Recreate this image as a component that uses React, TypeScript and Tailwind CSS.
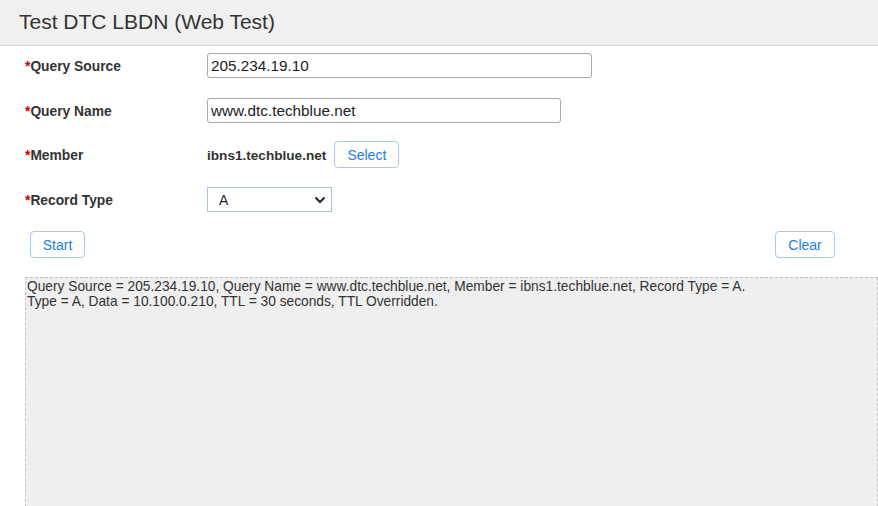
import React from "react";

function Label({ text }: { text: string }) {
  return (
    <div className="w-[182px] shrink-0 pt-[3px] text-[13.8px] font-bold text-[#333]">
      <span className="text-[#c00]">*</span>
      {text}
    </div>
  );
}

function Btn({ children, className = "" }: { children: React.ReactNode; className?: string }) {
  return (
    <button
      className={
        "h-[27px] rounded-[4px] border border-[#a9c8ec] bg-white pt-[1px] text-[14px] text-[#1c7ee0] " + className
      }
    >
      {children}
    </button>
  );
}

export default function App() {
  return (
    <div className="h-[506px] w-[878px] overflow-hidden bg-white font-['Liberation_Sans',Arial,sans-serif] text-[#333]">
      <div className="flex h-[46px] items-center border-b border-[#dcdcdc] bg-[#f0f0f0] pl-[19px] pb-[2px]">
        <h1 className="text-[21px] text-[#333]">Test DTC LBDN (Web Test)</h1>
      </div>

      <div className="flex flex-col pl-[25px]">
        <div className="mt-[7px] flex items-center">
          <Label text="Query Source" />
          <input
            readOnly
            value="205.234.19.10"
            className="h-[25px] w-[385px] rounded-[3px] border border-[#a8a8a8] px-[3px] text-[15.3px] text-[#222] outline-none"
          />
        </div>
        <div className="mt-[20px] flex items-center">
          <Label text="Query Name" />
          <input
            readOnly
            value="www.dtc.techblue.net"
            className="h-[25px] w-[354px] rounded-[3px] border border-[#a8a8a8] px-[3px] text-[15.3px] text-[#222] outline-none"
          />
        </div>
        <div className="mt-[18px] flex items-center">
          <Label text="Member" />
          <span className="pt-[3px] text-[13.6px] font-bold text-[#333]">ibns1.techblue.net</span>
          <Btn className="ml-[8px] w-[65px]">Select</Btn>
        </div>
        <div className="mt-[19px] flex items-center">
          <Label text="Record Type" />
          <div className="flex h-[25px] w-[125px] items-center justify-between border border-[#a6c4e6] bg-white pl-[11px] pr-[4px] text-[14px] text-[#222]">
            <span className="pt-[2px]">A</span>
            <svg width="14" height="14" viewBox="0 0 14 14">
              <path d="M2.5 4.5 L7 9 L11.5 4.5" fill="none" stroke="#222" strokeWidth="2" />
            </svg>
          </div>
        </div>
        <div className="mt-[19px] flex items-center justify-between pl-[5px] pr-[43px]">
          <Btn className="w-[55px]">Start</Btn>
          <Btn className="w-[60px]">Clear</Btn>
        </div>
        <div className="mt-[19px] h-[240px] border border-dashed border-[#c4c4c4] bg-[#efefef] px-[1px] py-[1px] text-[13.75px] leading-[15px] text-[#333]">
          <div>
            Query Source = 205.234.19.10, Query Name = www.dtc.techblue.net, Member = ibns1.techblue.net, Record Type = A.
          </div>
          <div>Type = A, Data = 10.100.0.210, TTL = 30 seconds, TTL Overridden.</div>
        </div>
      </div>
    </div>
  );
}
